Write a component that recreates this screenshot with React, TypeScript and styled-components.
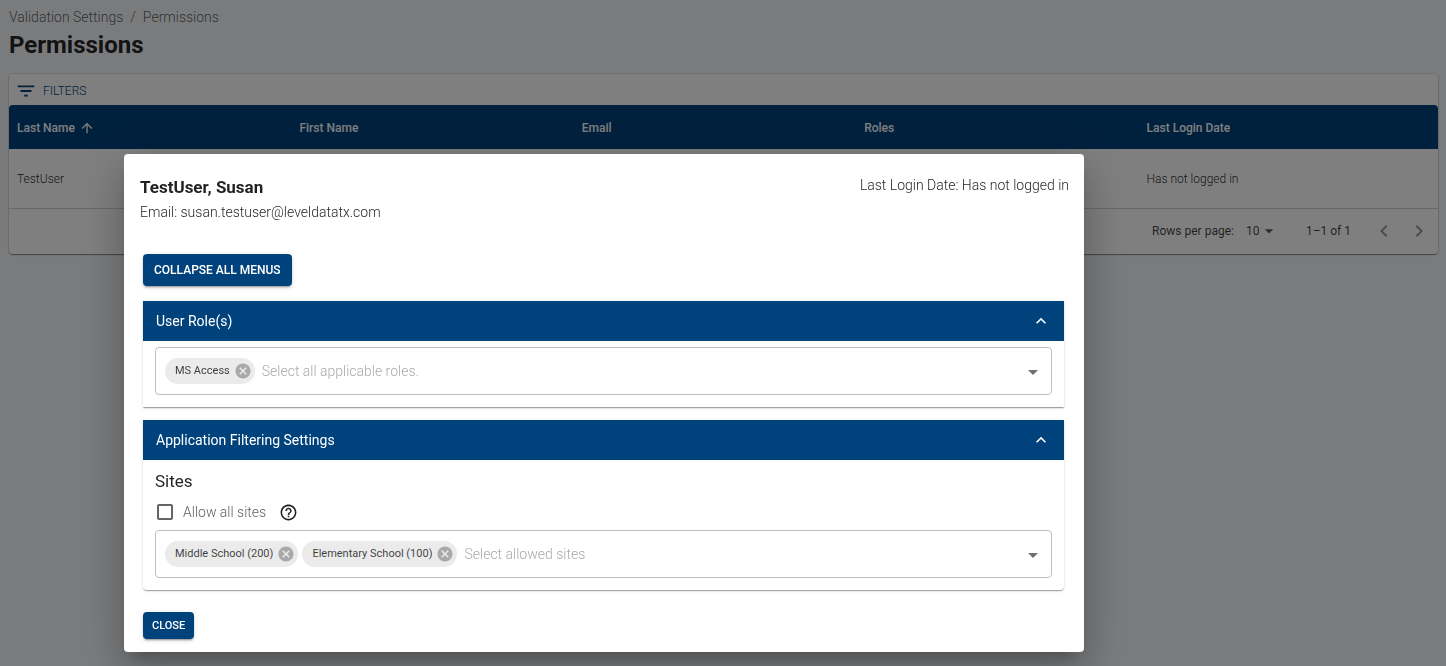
import React, { useState } from "react";
import styled, { createGlobalStyle } from "styled-components";
import {
  MdArrowDropDown,
  MdArrowUpward,
  MdCancel,
  MdChevronLeft,
  MdChevronRight,
  MdExpandLess,
  MdFilterList,
  MdHelpOutline,
} from "react-icons/md";

const navy = "#00427c";
const ink = "rgba(0, 0, 0, 0.87)";
const softInk = "rgba(0, 0, 0, 0.65)";
const paperShadow =
  "0 2px 1px -1px rgba(0, 0, 0, 0.2), 0 1px 1px 0 rgba(0, 0, 0, 0.14), 0 1px 3px 0 rgba(0, 0, 0, 0.12)";

const GlobalStyle = createGlobalStyle`
  *, *::before, *::after { box-sizing: border-box; }
  body {
    margin: 0;
    min-height: 100vh;
    background: #f4f7fb;
    color: ${ink};
    font-family: Roboto, "Liberation Sans", sans-serif;
    font-size: 14px;
    font-weight: 300;
    line-height: 20px;
  }
  button, input, select { font: inherit; color: inherit; }
  h1, h2, h3, p { margin: 0; }
`;

const Page = styled.main`
  padding: 7px 8px 16px 9px;
`;

const Breadcrumbs = styled.nav`
  display: flex;
  gap: 7px;
  color: ${softInk};
`;

const Crumb = styled.a`
  color: inherit;
  text-decoration: none;
`;

const PageTitle = styled.h1`
  margin: 2px 0 13px;
  font-size: 24px;
  font-weight: 700;
  line-height: 32px;
`;

const Paper = styled.section`
  border-radius: 4px;
  background: #fff;
  box-shadow: 0 0 0 1px rgba(0, 0, 0, 0.08), ${paperShadow};
`;

const FilterButton = styled.button`
  display: flex;
  align-items: center;
  gap: 6px;
  height: 31px;
  padding: 2px 6px 0;
  border: 0;
  background: none;
  color: ${navy};
  font-size: 12px;
`;

const Table = styled.table`
  width: 100%;
  table-layout: fixed;
  border-collapse: separate;
  border-spacing: 0;
  font-size: 12px;
`;

const EdgeColumn = styled.col`
  width: 17px;
`;

const HeadCell = styled.th`
  height: 44px;
  padding: 2px 8px 0;
  background: ${navy};
  color: #fff;
  font-weight: 500;
  text-align: left;
  &:first-child { border-top-left-radius: 4px; }
  &:last-child { border-top-right-radius: 4px; }
`;

const SortLabel = styled.span`
  display: inline-flex;
  align-items: center;
  gap: 4px;
`;

const Cell = styled.td`
  height: 60px;
  padding: 0 8px;
  border-bottom: 1px solid #d0d0d0;
`;

const Pagination = styled.div`
  display: flex;
  align-items: center;
  justify-content: flex-end;
  height: 45px;
  padding: 0 7px 2px 0;
  font-size: 12px;
  font-weight: 400;
  color: rgba(0, 0, 0, 0.75);
`;

const PageSize = styled.span`
  position: relative;
  display: inline-flex;
  margin: 0 32px 0 12px;
  svg {
    position: absolute;
    right: -5px;
    top: 0;
    pointer-events: none;
    color: ${softInk};
  }
`;

const PageSizeSelect = styled.select`
  width: 28px;
  padding: 0;
  border: 0;
  background: none;
  appearance: none;
`;

const PageArrows = styled.span`
  display: flex;
  gap: 11px;
  margin-left: 21px;
`;

const IconButton = styled.button`
  display: inline-flex;
  padding: 0;
  border: 0;
  background: none;
  &:disabled { color: rgba(0, 0, 0, 0.4); }
`;

const Backdrop = styled.div`
  position: fixed;
  inset: 0;
  overflow: auto;
  padding: 154px 16px 13px 124px;
  background: rgba(0, 0, 0, 0.5);
`;

const Dialog = styled.div`
  max-width: 960px;
  padding: 21px 20px 13px 19px;
  border-radius: 4px;
  background: #fff;
  box-shadow: 0 11px 15px -7px rgba(0, 0, 0, 0.2), 0 24px 38px 3px rgba(0, 0, 0, 0.14),
    0 9px 46px 8px rgba(0, 0, 0, 0.12);
`;

const DialogHeader = styled.header`
  display: flex;
  justify-content: space-between;
  align-items: flex-start;
  margin: 0 -5px 32px -3px;
`;

const UserName = styled.h2`
  padding-bottom: 2px;
  font-size: 17px;
  font-weight: 700;
  line-height: 25px;
`;

const ActionButton = styled.button<{ $small?: boolean }>`
  display: block;
  height: ${(p) => (p.$small ? 27 : 32)}px;
  padding: 0 ${(p) => (p.$small ? 9 : 11)}px;
  border: 0;
  border-radius: 4px;
  background: ${navy};
  color: #fff;
  font-size: ${(p) => (p.$small ? 11 : 12)}px;
  font-weight: 500;
  text-transform: uppercase;
  box-shadow: 0 3px 1px -2px rgba(0, 0, 0, 0.2), 0 2px 2px 0 rgba(0, 0, 0, 0.14),
    0 1px 5px 0 rgba(0, 0, 0, 0.12);
`;

const Panels = styled.div`
  display: grid;
  gap: 13px;
  margin: 15px 0 22px;
`;

const Panel = styled.section`
  background: #fff;
  box-shadow: ${paperShadow};
  &:last-child { border-radius: 0 0 4px 4px; }
`;

const PanelToggle = styled.button<{ $open: boolean }>`
  display: flex;
  align-items: center;
  justify-content: space-between;
  width: 100%;
  height: 40px;
  padding: 0 13px;
  border: 0;
  background: ${navy};
  color: #fff;
  font-size: 14px;
  font-weight: 400;
  svg { transform: rotate(${(p) => (p.$open ? 0 : 180)}deg); }
`;

const PanelBody = styled.div`
  padding: 6px 12px 12px;
`;

const GroupTitle = styled.h3`
  padding: 3px 0 4px;
  font-size: 17px;
  font-weight: 400;
  line-height: 24px;
`;

const CheckRow = styled.div`
  display: flex;
  align-items: center;
  gap: 13px;
  height: 30px;
  margin-bottom: 3px;
`;

const CheckLabel = styled.label`
  display: flex;
  align-items: center;
  gap: 10px;
  color: ${softInk};
`;

const Checkbox = styled.input`
  width: 16px;
  height: 16px;
  margin: 0 0 0 2px;
  border: 2px solid #666;
  border-radius: 2px;
  background: #fff;
  appearance: none;
  &:checked { background: ${navy}; border-color: ${navy}; }
`;

const Field = styled.div`
  display: flex;
  align-items: center;
  gap: 4px;
  height: 48px;
  padding: 0 6px 0 9px;
  border: 1px solid #c0c0c0;
  border-radius: 4px;
`;

const Chip = styled.span`
  display: inline-flex;
  flex: none;
  align-items: center;
  gap: 4px;
  height: 26px;
  padding: 0 3px 0 10px;
  border-radius: 13px;
  background: #ebebeb;
  color: rgba(0, 0, 0, 0.75);
  font-size: 11px;
  font-weight: 400;
  ${IconButton} { color: #a9a9a9; }
`;

const FieldInput = styled.input`
  flex: 1;
  min-width: 30px;
  padding: 0 3px;
  border: 0;
  outline: 0;
  background: none;
  &::placeholder { color: #aaa; opacity: 1; }
`;

const DropButton = styled(IconButton)`
  padding-top: 2px;
  color: #707070;
`;

function TagField({ label, placeholder, initial }: { label: string; placeholder: string; initial: string[] }) {
  const [tags, setTags] = useState(initial);
  return (
    <Field>
      {tags.map((tag) => (
        <Chip key={tag}>
          {tag}
          <IconButton
            type="button"
            aria-label={`Remove ${tag}`}
            onClick={() => setTags(tags.filter((t) => t !== tag))}
          >
            <MdCancel size={18} />
          </IconButton>
        </Chip>
      ))}
      <FieldInput type="text" aria-label={label} placeholder={placeholder} />
      <DropButton type="button" aria-label={`Open ${label}`}>
        <MdArrowDropDown size={24} />
      </DropButton>
    </Field>
  );
}

function Accordion({
  title,
  open,
  onToggle,
  children,
}: {
  title: string;
  open: boolean;
  onToggle: () => void;
  children: React.ReactNode;
}) {
  return (
    <Panel>
      <PanelToggle type="button" $open={open} aria-expanded={open} onClick={onToggle}>
        {title}
        <MdExpandLess size={20} />
      </PanelToggle>
      {open && <PanelBody>{children}</PanelBody>}
    </Panel>
  );
}

export default function App() {
  const [open, setOpen] = useState({ roles: true, filters: true });
  const [visible, setVisible] = useState(true);
  const anyOpen = open.roles || open.filters;

  return (
    <>
      <GlobalStyle />
      <Page>
        <Breadcrumbs aria-label="Breadcrumb">
          <Crumb href="#settings">Validation Settings</Crumb>
          <span>/</span>
          <Crumb href="#permissions">Permissions</Crumb>
        </Breadcrumbs>
        <PageTitle>Permissions</PageTitle>
        <Paper>
          <FilterButton type="button">
            <MdFilterList size={22} />
            FILTERS
          </FilterButton>
          <Table>
            <colgroup>
              <col />
              <col />
              <col />
              <col />
              <col />
              <EdgeColumn />
            </colgroup>
            <thead>
              <tr>
                <HeadCell scope="col" aria-sort="ascending">
                  <SortLabel>
                    Last Name
                    <MdArrowUpward size={16} />
                  </SortLabel>
                </HeadCell>
                <HeadCell scope="col">First Name</HeadCell>
                <HeadCell scope="col">Email</HeadCell>
                <HeadCell scope="col">Roles</HeadCell>
                <HeadCell scope="col" colSpan={2}>
                  Last Login Date
                </HeadCell>
              </tr>
            </thead>
            <tbody>
              <tr>
                <Cell>TestUser</Cell>
                <Cell />
                <Cell />
                <Cell />
                <Cell colSpan={2}>Has not logged in</Cell>
              </tr>
            </tbody>
          </Table>
          <Pagination>
            <label htmlFor="page-size">Rows per page:</label>
            <PageSize>
              <PageSizeSelect id="page-size" defaultValue="10">
                <option>10</option>
                <option>25</option>
              </PageSizeSelect>
              <MdArrowDropDown size={20} />
            </PageSize>
            <span>1–1 of 1</span>
            <PageArrows>
              <IconButton type="button" disabled aria-label="Previous page">
                <MdChevronLeft size={24} />
              </IconButton>
              <IconButton type="button" disabled aria-label="Next page">
                <MdChevronRight size={24} />
              </IconButton>
            </PageArrows>
          </Pagination>
        </Paper>
      </Page>

      {visible && (
        <Backdrop>
          <Dialog role="dialog" aria-modal="true" aria-labelledby="user-name">
            <DialogHeader>
              <div>
                <UserName id="user-name">TestUser, Susan</UserName>
                <p>Email: susan.testuser@leveldatatx.com</p>
              </div>
              <p>Last Login Date: Has not logged in</p>
            </DialogHeader>
            <ActionButton type="button" onClick={() => setOpen({ roles: !anyOpen, filters: !anyOpen })}>
              {anyOpen ? "Collapse all menus" : "Expand all menus"}
            </ActionButton>
            <Panels>
              <Accordion
                title="User Role(s)"
                open={open.roles}
                onToggle={() => setOpen({ ...open, roles: !open.roles })}
              >
                <TagField label="Roles" placeholder="Select all applicable roles." initial={["MS Access"]} />
              </Accordion>
              <Accordion
                title="Application Filtering Settings"
                open={open.filters}
                onToggle={() => setOpen({ ...open, filters: !open.filters })}
              >
                <GroupTitle>Sites</GroupTitle>
                <CheckRow>
                  <CheckLabel>
                    <Checkbox type="checkbox" />
                    Allow all sites
                  </CheckLabel>
                  <IconButton type="button" aria-label="Help">
                    <MdHelpOutline size={19} />
                  </IconButton>
                </CheckRow>
                <TagField
                  label="Sites"
                  placeholder="Select allowed sites"
                  initial={["Middle School (200)", "Elementary School (100)"]}
                />
              </Accordion>
            </Panels>
            <ActionButton type="button" $small onClick={() => setVisible(false)}>
              Close
            </ActionButton>
          </Dialog>
        </Backdrop>
      )}
    </>
  );
}
